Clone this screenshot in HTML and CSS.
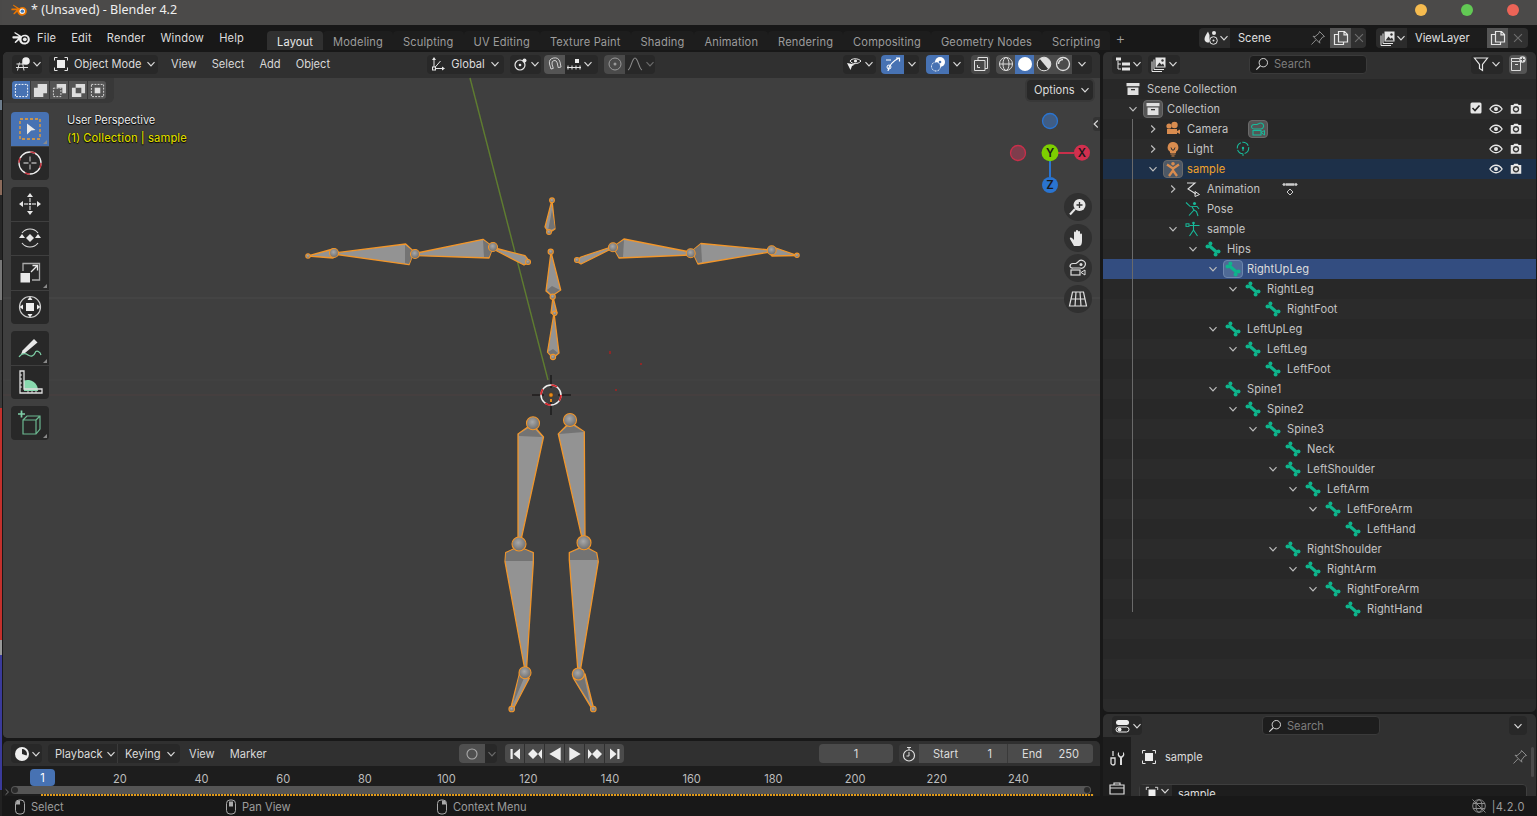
FILE: index.html
```html
<!DOCTYPE html>
<html lang="en">
<head>
<meta charset="utf-8">
<title>Blender 4.2</title>
<link rel="stylesheet" href="styles.css">
</head>
<body>
<svg class="defs" aria-hidden="true">
  <defs>
    <radialGradient id="ball" cx="45%" cy="40%" r="60%"><stop offset="0" stop-color="#a8a8a8"/><stop offset="1" stop-color="#6e6e6e"/></radialGradient>
    <symbol id="chev" viewBox="0 0 10 10"><path d="M1.5 3.2 5 6.8l3.5-3.6" fill="none" stroke="currentColor" stroke-width="1.2"/></symbol>
    <symbol id="chevr" viewBox="0 0 10 10"><path d="M3.2 1.5 6.8 5 3.2 8.5" fill="none" stroke="currentColor" stroke-width="1.2"/></symbol>
    <symbol id="blend" viewBox="0 0 18 16"><path d="M1 6.200h6L2.600 3.200c-.6-.5 0-1.300.7-.9l6 3.600c1-.7 2.200-1.200 3.500-1.200 2.900 0 5 2 5 4.700 0 2.800-2.400 5-5.300 5-3 0-5.200-1.900-5.400-4.500L4 12.700c-.8.600-1.800-.2-1.100-1L6 8.400H1c-.8 0-.8-2.200 0-2.200z" fill="currentColor"/><circle cx="12.600" cy="9.400" r="3.100" fill="var(--hole)"/><circle cx="12.800" cy="9.300" r="1.900" fill="var(--core)"/></symbol>
    <symbol id="bone" viewBox="0 0 16 16"><path d="M4 4.500 12 11.500" stroke="#0fb48c" stroke-width="3.200" fill="none"/><circle cx="2.500" cy="5.600" r="2" fill="#0fb48c"/><circle cx="5.400" cy="2.500" r="2" fill="#0fb48c"/><circle cx="10.600" cy="13.500" r="2" fill="#0fb48c"/><circle cx="13.500" cy="10.400" r="2" fill="#0fb48c"/></symbol>
    <symbol id="eye" viewBox="0 0 16 16"><path d="M1 8c2-3 4.400-4.300 7-4.300S13 5 15 8c-2 3-4.400 4.300-7 4.300S3 11 1 8z" fill="none" stroke="#e6e6e6" stroke-width="1.500"/><circle cx="8" cy="8" r="2.300" fill="#e6e6e6"/></symbol>
    <symbol id="rcam" viewBox="0 0 16 16"><path d="M2 3.500h3l1-1.500h4l1 1.500h3v10H2z" fill="#e6e6e6"/><circle cx="8" cy="8.300" r="3.600" fill="#3a3a3a"/><circle cx="8" cy="8.300" r="2" fill="#e6e6e6"/></symbol>
    <symbol id="box" viewBox="0 0 16 16"><path d="M1.500 2h13v3.300h-13zM2.500 6.400h11v7.600h-11z" fill="#e0e0e0"/><rect x="6" y="8" width="4" height="1.300" fill="#333"/></symbol>
    <symbol id="obj" viewBox="0 0 16 16"><path d="M1.500 4.500v-3h3M11.500 1.500h3v3M14.500 11.500v3h-3M4.500 14.500h-3v-3" fill="none" stroke="#e6e6e6"/><rect x="4" y="4" width="8" height="8" fill="#eee"/></symbol>
    <symbol id="pin" viewBox="0 0 16 16"><path d="M9.500 1.500 14.500 6.500 12.700 7 9.500 11l.3 2.200-6.800-7L5 6.600 8.900 3.300zM5.800 10 1.500 14.500" fill="none" stroke="#8c8c8c"/></symbol>
    <symbol id="copy" viewBox="0 0 16 16"><path d="M5.500 1.500h6l3 3v7.500h-9zM11 1.500v3.300h3.500M5.500 4.500h-4v10h9V12" fill="none" stroke="#e6e6e6" stroke-width="1.200"/></symbol>
    <symbol id="close" viewBox="0 0 16 16"><path d="M3.500 3.500l9 9M12.500 3.500l-9 9" stroke="#6d6d6d" stroke-width="1.300"/></symbol>
    <symbol id="search" viewBox="0 0 16 16"><circle cx="9.500" cy="6.500" r="4.800" fill="none" stroke="#d8d8d8" stroke-width="1.100"/><path d="M6 10 1.500 14.500" stroke="#d8d8d8" stroke-width="1.300"/></symbol>
    <symbol id="images" viewBox="0 0 16 16"><path d="M4.500 1.500h10v10h-10z" fill="#e6e6e6"/><path d="M5.500 10.500l3-4 2 2.300 1.500-1.300 1.600 3z" fill="#333"/><circle cx="11.500" cy="4.500" r="1.200" fill="#333"/><path d="M3 3.500v10h10M1 5.500v10h10" fill="none" stroke="#e6e6e6"/></symbol>
    <symbol id="mouseL" viewBox="0 0 12 16"><rect x="1.500" y="1" width="9" height="14" rx="3.500" fill="none" stroke="#aaa"/><path d="M2 5.500h4V1.500H5Q2 1.500 2 4.500z" fill="#aaa"/></symbol>
    <symbol id="mouseM" viewBox="0 0 12 16"><rect x="1.500" y="1" width="9" height="14" rx="3.500" fill="none" stroke="#aaa"/><rect x="4" y="2.500" width="4" height="5" fill="#aaa"/></symbol>
    <symbol id="mouseR" viewBox="0 0 12 16"><rect x="1.500" y="1" width="9" height="14" rx="3.500" fill="none" stroke="#aaa"/><path d="M6 1.500h1q3 0 3 3v1H6z" fill="#aaa"/></symbol>
    <symbol id="armBody" viewBox="0 0 16 16"><circle cx="8" cy="2.800" r="1.800" fill="currentColor"/><path d="M2 3.500 8 7.500 14 3.500M8 6.500V9.500M8 9.500 4 15M8 9.500 12 15" fill="none" stroke="currentColor" stroke-width="2.300"/></symbol>
    <symbol id="poseIc" viewBox="0 0 16 16"><circle cx="9.500" cy="2.500" r="1.500" fill="#18b99a"/><path d="M1 1.500l4 3.800 7 .2 2 2.500M6.800 5.500 9 9l-5 5.500M9 9l2.500 1.500L13 15" fill="none" stroke="#18b99a" stroke-width="1.100"/></symbol>
    <symbol id="armData" viewBox="0 0 16 16"><circle cx="8.500" cy="2" r="1.300" fill="#18b99a"/><rect x="1" y="2.800" width="3" height="2.600" fill="none" stroke="#18b99a"/><path d="M4.500 4.500h10M8.500 3v6L4.500 15M8.500 9l4 6" fill="none" stroke="#18b99a" stroke-width="1.100"/></symbol>
  </defs>
</svg>

<div class="window">
  <div class="sliver"></div>
  <div class="app">

    <header class="titlebar">
      <svg class="ic16 logo-orange"><use href="#blend"/></svg>
      <span class="wintitle">* (Unsaved) - Blender 4.2</span>
      <div class="winbtns"><i class="dot yellow"></i><i class="dot green"></i><i class="dot red"></i></div>
    </header>

    <nav class="topbar">
      <svg class="logo-white"><use href="#blend"/></svg>
      <div class="menu"><span>File</span><span>Edit</span><span>Render</span><span>Window</span><span>Help</span></div>
      <div class="tabs">
        <span class="tab on">Layout</span><span class="tab">Modeling</span><span class="tab">Sculpting</span><span class="tab">UV Editing</span><span class="tab">Texture Paint</span><span class="tab">Shading</span><span class="tab">Animation</span><span class="tab">Rendering</span><span class="tab">Compositing</span><span class="tab">Geometry Nodes</span><span class="tab">Scripting</span>
      </div>
      <span class="plus">+</span>
      <div class="selector scene-sel">
        <span class="sel-ic"><svg class="ic16" viewBox="0 0 16 16"><path d="M5 1.500C3 5 1.500 7 1.500 9.200a3.500 3.500 0 0 0 5 3V5z" fill="#e6e6e6"/><circle cx="11" cy="3" r="2" fill="#e6e6e6"/><circle cx="10.500" cy="10.500" r="3.800" fill="none" stroke="#e6e6e6"/><circle cx="10.500" cy="10.500" r="1" fill="#e6e6e6"/></svg><svg class="chv"><use href="#chev"/></svg></span>
        <span class="sel-name scene-name">Scene<svg class="ic16 sel-pin"><use href="#pin"/></svg></span>
        <span class="sel-copy"><svg class="ic16"><use href="#copy"/></svg></span>
        <span class="sel-x"><svg class="ic14"><use href="#close"/></svg></span>
      </div>
      <div class="selector layer-sel">
        <span class="sel-ic"><svg class="ic16"><use href="#images"/></svg><svg class="chv"><use href="#chev"/></svg></span>
        <span class="sel-name layer-name">ViewLayer</span>
        <span class="sel-copy"><svg class="ic16"><use href="#copy"/></svg></span>
        <span class="sel-x"><svg class="ic14"><use href="#close"/></svg></span>
      </div>
    </nav>

    <main class="areas">
      <div class="left-col">

        <section class="viewport">
          <div class="vp-header">
            <span class="btn ed-btn"><svg class="ic16" viewBox="0 0 16 16"><path d="M1 11.500h12M2.500 14.500l2-8M9 14.500l-1.500-8M1.500 8h8" fill="none" stroke="#e0e0e0"/><circle cx="11" cy="5" r="3.800" fill="#eee"/></svg><svg class="chv"><use href="#chev"/></svg></span>
            <span class="btn mode-btn"><svg class="ic16"><use href="#obj"/></svg><span class="lbl">Object Mode</span><svg class="chv"><use href="#chev"/></svg></span>
            <div class="vp-menus"><span>View</span><span>Select</span><span>Add</span><span>Object</span></div>
            <span class="btn global-btn"><svg class="ic16" viewBox="0 0 16 16"><path d="M4 2.500V12.500H14M4 12.500 10.500 5" fill="none" stroke="#e6e6e6"/><path d="M2 4 4 1l2 3zM12 10.500l3 2-3 2z" fill="#e6e6e6"/><rect x="2.500" y="11" width="3" height="3" fill="#303030" stroke="#e6e6e6"/></svg><span class="lbl">Global</span><svg class="chv"><use href="#chev"/></svg></span>
            <span class="btn pivot-btn"><svg class="ic16" viewBox="0 0 16 16"><circle cx="7" cy="9" r="5" fill="none" stroke="#e6e6e6" stroke-width="1.200"/><circle cx="7" cy="9" r="1.300" fill="#e6e6e6"/><circle cx="11.500" cy="4.500" r="2" fill="#e6e6e6"/></svg><svg class="chv"><use href="#chev"/></svg></span>
            <span class="btn snap-btn"><span class="cell-grey"><svg class="ic16" viewBox="0 0 16 16"><path d="M4 13 2.500 8Q1.500 3 6.500 2T13 6l1 5-2.800.6-1-4.800Q9.500 4 7 4.500T5 8l1.300 4.400z" fill="none" stroke="#d0d0d0"/></svg></span><svg class="ic16" viewBox="0 0 16 16"><path d="M1 11.500h14M2 9.500v4M6 9.500v4M10 9.500v4M14 9.500v4" fill="none" stroke="#e6e6e6"/><rect x="9" y="3" width="4" height="4" fill="#eee"/></svg><svg class="chv"><use href="#chev"/></svg></span>
            <span class="btn prop-btn"><span class="cell-grey dim"><svg class="ic16" viewBox="0 0 16 16"><circle cx="8" cy="8" r="6" fill="none" stroke="#9a9a9a"/><circle cx="8" cy="8" r="1.500" fill="#9a9a9a"/></svg></span><svg class="ic16" viewBox="0 0 16 16"><path d="M1 14c3-1 4-12 7-12s4 11 7 12" fill="none" stroke="#8a8a8a" stroke-width="1.100"/></svg><svg class="chv dim-chv"><use href="#chev"/></svg></span>
            <div class="vp-right">
              <span class="btn vis-btn"><svg class="ic16" viewBox="0 0 16 16"><path d="M4 5c2-3 8-3 11 0-3 3.500-9 3.500-11 0z" fill="none" stroke="#eee"/><circle cx="9.500" cy="5" r="1.600" fill="#eee"/><path d="M1 7l8 1.500-3 1.500-1.500 4z" fill="#eee"/></svg><svg class="chv"><use href="#chev"/></svg></span>
              <span class="btn gizmo-btn"><span class="cell-blue"><svg class="ic16" viewBox="0 0 16 16"><path d="M3 15C4 9 8 5 14 2M11 2h3.500v3.500" fill="none" stroke="#fff" stroke-width="1.200"/><circle cx="4" cy="11" r="2" fill="none" stroke="#fff"/><path d="M1 4h5" stroke="#fff"/></svg></span><svg class="chv"><use href="#chev"/></svg></span>
              <span class="btn overlay-btn"><span class="cell-blue"><svg class="ic16" viewBox="0 0 16 16"><circle cx="10" cy="6" r="5" fill="#fff"/><circle cx="6" cy="10.500" r="4.500" fill="#4772b3" stroke="#fff" stroke-dasharray="2 1.200"/><circle cx="10" cy="6" r="1.300" fill="#4772b3"/></svg></span><svg class="chv"><use href="#chev"/></svg></span>
              <span class="btn xray-btn"><svg class="ic16" viewBox="0 0 16 16"><path d="M5 4V1.500h9.500v11H12M1.500 4.500H12v10H1.500z" fill="none" stroke="#e0e0e0"/><path d="M4.500 9v2.500H7" fill="none" stroke="#e0e0e0"/></svg></span>
              <span class="btn shade-btn">
                <span class="shade"><svg class="ic16" viewBox="0 0 16 16"><circle cx="8" cy="8" r="6.500" fill="none" stroke="#ddd"/><ellipse cx="8" cy="8" rx="3" ry="6.500" fill="none" stroke="#ddd"/><path d="M1.500 8h13" stroke="#ddd"/></svg></span>
                <span class="shade active"><svg class="ic16" viewBox="0 0 16 16"><circle cx="8" cy="8" r="7" fill="#fff"/></svg></span>
                <span class="shade"><svg class="ic16" viewBox="0 0 16 16"><circle cx="8" cy="8" r="6.800" fill="#333" stroke="#ddd"/><path d="M8 1.200a6.800 6.800 0 0 1 0 13.600z" fill="#ddd" transform="rotate(-40 8 8)"/></svg></span>
                <span class="shade"><svg class="ic16" viewBox="0 0 16 16"><circle cx="8" cy="8" r="6.500" fill="none" stroke="#ddd" stroke-width="1.300"/><path d="M3.500 8A4.500 4.500 0 0 1 8 3.500" fill="none" stroke="#ddd" stroke-width="1.500"/></svg></span>
                <span class="shade-ch"><svg class="chv"><use href="#chev"/></svg></span>
              </span>
            </div>
          </div>

          <div class="canvas">
            <svg class="scene" viewBox="3 78 1097 660">
              <path class="grid" d="M3 298H1100"/>
              <path class="grid faint" d="M3 380H1100"/>
              <path class="xaxis" d="M3 395H1100"/>
              <path class="yaxis" d="M470 78 548 380"/>

              <!-- arm, screen left -->
              <polygon class="b" points="308,256 333,249 338,253 333,258"/>
              <polygon class="b" points="337,252.700 405.700,244 414,251.700 409,264.700 337,254.500"/>
              <polygon class="s" points="405,245 414,252 409,264 405,263"/>
              <polygon class="b" points="417,253 483,239.300 493,247 489,258 417,255.700"/>
              <polygon class="s" points="483,240 493,247 489,257 484,257"/>
              <polygon class="b" points="495,248 525,255.700 530,262 524,265 495,250"/>
              <circle class="j" cx="308" cy="256" r="2.200"/><circle class="j" cx="334" cy="253" r="4.500"/><circle class="j" cx="415" cy="254" r="4.500"/><circle class="j" cx="493" cy="247" r="4.500"/><circle class="j" cx="528" cy="262" r="2.500"/>

              <!-- arm, screen right -->
              <polygon class="b" points="797.500,255.500 773,247 767,250.500 772,256"/>
              <polygon class="b" points="770,250 701,243.500 692,251 698,264 770,252"/>
              <polygon class="s" points="701,244 692,251 698,263 702,262"/>
              <polygon class="b" points="690,252 624,239 613,247 619,258 690,255"/>
              <polygon class="s" points="624,240 613,247 619,257 623,257"/>
              <polygon class="b" points="611,247 581,257 576,261 581,264 611,249"/>
              <circle class="j" cx="797" cy="255.300" r="2.200"/><circle class="j" cx="771.700" cy="250.300" r="4.500"/><circle class="j" cx="690.700" cy="253.300" r="4.500"/><circle class="j" cx="613" cy="247.300" r="4.500"/><circle class="j" cx="577" cy="260" r="2.500"/>

              <!-- spine and head -->
              <polygon class="b" points="552,200 545,227 549,233 555,229"/>
              <polygon class="s" points="552,210 548,231 555,228"/>
              <polygon class="b" points="551,252 546,291 552,296 560.700,290"/>
              <polygon class="s" points="547,290 552,295 560,290 552,286"/>
              <polygon class="b" points="553,297 551,313 555,315 557,313"/>
              <polygon class="b" points="554,313 547.500,352 553,358 559,353"/>
              <polygon class="s" points="548,352 553,357 558,353 553,349"/>
              <circle class="j" cx="552" cy="200.300" r="2.400"/><circle class="j" cx="550.700" cy="251.700" r="2.600"/><circle class="j" cx="549" cy="232" r="2.400"/><circle class="j" cx="552.700" cy="296.700" r="2.600"/><circle class="j" cx="554.700" cy="313.300" r="2.200"/><circle class="j" cx="553" cy="357" r="2.600"/>

              <!-- legs -->
              <polygon class="b" points="532,424 518,434 518,540 521,540 543.500,437"/>
              <polygon class="s" points="532,426 519,434 519,436 542,437"/>
              <polygon class="b" points="570,422 558.300,434 581.700,536.700 585,536 584.300,431.700"/>
              <polygon class="s" points="570,424 559,434 584,432"/>
              <polygon class="b" points="518.300,546.700 505.700,552.700 505,561.700 524.300,666.700 526.700,666.700 533.300,563 533.300,552.700"/>
              <polygon class="s" points="519,547 506,553 505.500,561 532.500,561 532.500,553"/>
              <polygon class="b" points="584,546 569.300,552.700 569.300,560 577.700,668.300 580.700,668.300 598.300,561.700 596.700,552.700"/>
              <polygon class="s" points="584,547 570,553 570,560 597.500,560 596,553"/>
              <polygon class="b" points="520,671.700 510.700,708.300 512.700,710 529.300,678.300"/>
              <polygon class="s" points="520,672 513,704 524,678"/>
              <polygon class="b" points="573.300,678 591.700,708.300 594,710 585,674"/>
              <polygon class="s" points="574,678 584,676 590,703"/>
              <circle class="j" cx="533" cy="423.300" r="6.500"/><circle class="j" cx="570" cy="420" r="6.500"/><circle class="j" cx="519" cy="544" r="7"/><circle class="j" cx="584" cy="542.700" r="7"/><circle class="j" cx="525" cy="672.700" r="6"/><circle class="j" cx="578.300" cy="674" r="6"/><circle class="j" cx="511.700" cy="709" r="2.800"/><circle class="j" cx="593.300" cy="709" r="2.800"/>

              <!-- 3D cursor and origin -->
              <path class="curs" d="M551 375V388M551 402V415M532 395H544M558 395H571"/>
              <circle class="cur-w" cx="551" cy="395" r="10"/>
              <circle class="cur-r" cx="551" cy="395" r="10"/>
              <circle class="origin" cx="551" cy="395" r="2.200"/>
              <rect class="origin2" x="550" y="399" width="2" height="3"/>
              <path class="specks" d="M610 351v3M640 364h2M615 390h2"/>

              <!-- gizmo -->
              <path class="gz-x" d="M1050 153H1074"/>
              <path class="gz-z" d="M1050 153V177"/>
              <circle class="gz-b2" cx="1050" cy="121" r="7.500"/>
              <circle class="gz-r2" cx="1018" cy="153" r="7.500"/>
              <circle class="gz-y" cx="1050" cy="152.700" r="8.500"/>
              <circle class="gz-xc" cx="1082" cy="152.700" r="8"/>
              <circle class="gz-zc" cx="1050" cy="185" r="8"/>
              <text class="gz-t" x="1050" y="157">Y</text>
              <text class="gz-t" x="1082" y="157">X</text>
              <text class="gz-t" x="1050" y="189">Z</text>
            </svg>

            <div class="tool-header">
              <span class="sm on"><svg class="ic16" viewBox="0 0 16 16"><rect x="1.500" y="1.500" width="13" height="13" fill="none" stroke="#fff" stroke-dasharray="2 1.300"/></svg></span>
              <span class="sm"><svg class="ic16" viewBox="0 0 16 16"><path d="M5 1h10v10h-4v4H1V5h4z" fill="#ddd"/></svg></span>
              <span class="sm"><svg class="ic16" viewBox="0 0 16 16"><path d="M5 1h10v10h-4V5H5z" fill="#ddd"/><path d="M1.500 5.500h8v9h-8z" fill="none" stroke="#ddd" stroke-dasharray="2 1.300"/></svg></span>
              <span class="sm"><svg class="ic16" viewBox="0 0 16 16"><path fill-rule="evenodd" d="M5 1h10v10h-4v4H1V5h4zM5 5v6h6V5z" fill="#ddd"/></svg></span>
              <span class="sm"><svg class="ic16" viewBox="0 0 16 16"><path d="M1.500 1.500h13v13h-13z" fill="none" stroke="#ddd" stroke-dasharray="2 1.300"/><rect x="5" y="5" width="6" height="6" fill="#ddd"/></svg></span>
            </div>

            <button class="options"><span class="opt-t">Options</span><svg class="chv"><use href="#chev"/></svg></button>

            <div class="vp-info">
              <div class="info-1">User Perspective</div>
              <div class="info-2">(1) Collection | sample</div>
            </div>

            <div class="tools">
              <div class="tgroup">
                <span class="tool on corner"><svg class="ic26" viewBox="0 0 26 26"><rect x="3" y="3" width="20" height="20" fill="none" stroke="#f0a030" stroke-width="1.300" stroke-dasharray="3 2"/><path d="M10 7.500 18.500 14l-4.300.5L10 18.500z" fill="#e8e8e8"/></svg></span>
                <span class="tool"><svg class="ic26" viewBox="0 0 26 26"><circle cx="13" cy="13" r="11" fill="none" stroke="#eee" stroke-width="1.300"/><circle cx="13" cy="13" r="11" fill="none" stroke="#c0303a" stroke-width="1.500" stroke-dasharray="5 12.280"/><path d="M13 6.500v5M13 14.500v5M6.500 13h5M14.500 13h5" stroke="#aaa" stroke-width="1.300"/></svg></span>
              </div>
              <div class="tgroup">
                <span class="tool"><svg class="ic26" viewBox="0 0 26 26"><path d="M13 2l3 4h-6zM13 24l3-4h-6zM2 13l4-3v6zM24 13l-4-3v6z" fill="#e8e8e8"/><path d="M13 7v4M13 15v4M7 13h4M15 13h4" stroke="#bbb" stroke-width="1.400"/><circle cx="13" cy="13" r="1.300" fill="#ddd"/></svg></span>
                <span class="tool"><svg class="ic26" viewBox="0 0 26 26"><path d="M5 8a10 10 0 0 1 16 0M21 18a10 10 0 0 1-16 0" fill="none" stroke="#ddd" stroke-width="1.200"/><path d="M13 9l4 4-4 4-4-4z" fill="#e6e6e6"/><path d="M2 13h6L5 9zM18 13h6l-3-4z" fill="#e8e8e8"/></svg></span>
                <span class="tool corner"><svg class="ic26" viewBox="0 0 26 26"><rect x="3.500" y="13" width="9.500" height="9.500" fill="#e8e8e8"/><path d="M6 11V3.500h16.500V20H15" fill="none" stroke="#aaa" stroke-width="1.300"/><path d="M14 12 20 6M15.500 5.500h5v5" fill="none" stroke="#e8e8e8" stroke-width="1.300"/></svg></span>
                <span class="tool"><svg class="ic26" viewBox="0 0 26 26"><circle cx="13" cy="13" r="10.500" fill="none" stroke="#ccc" stroke-width="1.200"/><rect x="9" y="9" width="8" height="8" fill="#eee"/><path d="M13 2.500l2.500 3.500h-5zM13 23.500l2.500-3.500h-5zM2.500 13l3.500-2.500v5zM23.500 13 20 10.500v5z" fill="#eee"/></svg></span>
              </div>
              <div class="tgroup">
                <span class="tool corner"><svg class="ic26" viewBox="0 0 26 26"><path d="M8 18 4 19.500l1.500-4L17 4l3.500 3.500z" fill="#e8e8e8"/><path d="M2 22c3-4 6-4 9-2s6 1 7-2 5-2 6 2" fill="none" stroke="#7fd0a8" stroke-width="1.200"/></svg></span>
                <span class="tool"><svg class="ic26" viewBox="0 0 26 26"><path d="M7 22V11.500A10.500 10.500 0 0 1 21 22z" fill="#88d8ae"/><path d="M3 24V2h4v18h18v4z" fill="none" stroke="#ddd" stroke-width="1.300"/><path d="M3 6h2M3 10h2M3 14h2M3 18h2M11 24v-2M15 24v-2M19 24v-2" stroke="#ddd"/></svg></span>
              </div>
              <div class="tgroup">
                <span class="tool corner"><svg class="ic26" viewBox="0 0 26 26"><path d="M1 4h7M4.500 .5v7" stroke="#7fd0a8" stroke-width="1.700"/><path d="M6 10 10 6h13v13l-4 5H6zM6 10h13v14M19 10l4-4" fill="none" stroke="#6bb890" stroke-width="1.200"/></svg></span>
              </div>
            </div>

            <span class="npanel-arrow"><svg class="chv"><use href="#chevr"/></svg></span>

            <div class="navs">
              <span class="nav"><svg class="ic20" viewBox="0 0 20 20"><circle cx="11.500" cy="8" r="6" fill="#e6e6e6"/><path d="M11.500 5v6M8.500 8h6" stroke="#333" stroke-width="1.300"/><path d="M7 12 2 17.500" stroke="#e6e6e6" stroke-width="2"/></svg></span>
              <span class="nav"><svg class="ic20" viewBox="0 0 20 20"><path d="M6 18 2 11c-.6-1.500 1-2 2-1l2 2V4.500c0-1.500 2-1.500 2 0V9V3c0-1.500 2-1.500 2 0v6V4c0-1.500 2-1.500 2 0v6-3.500c0-1.500 2-1.500 2 0V13c0 3-1 5-3 5z" fill="#e6e6e6"/></svg></span>
              <span class="nav"><svg class="ic20" viewBox="0 0 20 20"><path d="M2 8.500a3 3 0 0 1 3-3h3l2-1.500a4 4 0 1 1 2 6H5a3 3 0 0 1-3-1.500z" fill="none" stroke="#ddd" stroke-width="1.200"/><circle cx="13" cy="6.500" r="1.500" fill="#ddd"/><rect x="3" y="12" width="9" height="5" fill="none" stroke="#ddd" stroke-width="1.200"/><path d="M13 14.500l4-2.500v5z" fill="none" stroke="#ddd"/></svg></span>
              <span class="nav"><svg class="ic20" viewBox="0 0 20 20"><path d="M4.500 3h11L18.500 17h-17zM3 10h14M8 3 7 17M12 3l1 14" fill="none" stroke="#ddd" stroke-width="1.200"/></svg></span>
            </div>
          </div>
        </section>

        <section class="timeline">
          <div class="tl-header">
            <span class="btn ed-btn"><svg class="ic16" viewBox="0 0 16 16"><path fill-rule="evenodd" d="M8 1a7 7 0 1 1 0 14A7 7 0 0 1 8 1zM8 3v5l4.500 1.500A5 5 0 0 0 13 8a5 5 0 0 0-5-5z" fill="#eee"/></svg><svg class="chv"><use href="#chev"/></svg></span>
            <span class="linked">
              <span class="btn pb-btn"><span class="lbl">Playback</span><svg class="chv"><use href="#chev"/></svg></span><span class="btn kb-btn"><span class="lbl">Keying</span><svg class="chv"><use href="#chev"/></svg></span>
            </span>
            <div class="tl-menus"><span>View</span><span>Marker</span></div>
            <span class="btn rec-btn"><span class="cell-grey wide"><svg class="ic12" viewBox="0 0 12 12"><circle cx="6" cy="6" r="5" fill="none" stroke="#aaa" stroke-width="1.100"/></svg></span><svg class="chv dim-chv"><use href="#chev"/></svg></span>
            <span class="transport">
              <span><svg class="ic12" viewBox="0 0 12 12"><path d="M1.500 1h2.200v10H1.500zM11 .5v11L4.500 6z" fill="#eee"/></svg></span>
              <span><svg class="ic16" viewBox="0 0 16 16"><path d="M6 3l5 5-5 5-5-5zM15 3v10l-4-5z" fill="#eee"/></svg></span>
              <span><svg class="ic16" viewBox="0 0 14 14"><path d="M12 1v12L2 7z" fill="#eee"/></svg></span>
              <span><svg class="ic16" viewBox="0 0 14 14"><path d="M2 1v12l10-6z" fill="#eee"/></svg></span>
              <span><svg class="ic16" viewBox="0 0 16 16"><path d="M1 3v10l4-5zM10 3l5 5-5 5-5-5z" fill="#eee"/></svg></span>
              <span><svg class="ic12" viewBox="0 0 12 12"><path d="M8.300 1h2.200v10H8.300zM1 .5v11L7.500 6z" fill="#eee"/></svg></span>
            </span>
            <span class="frame-cur">1</span>
            <span class="frame-range">
              <span class="fr-ic"><svg class="ic16" viewBox="0 0 16 16"><circle cx="8" cy="9.500" r="5.500" fill="none" stroke="#ddd" stroke-width="1.200"/><path d="M8 6v4H5.500M6 1.500h4M8 1.500v2.500" fill="none" stroke="#ddd"/></svg></span>
              <span class="fr-field f-start"><b>Start</b><b>1</b></span>
              <span class="fr-field f-end"><b>End</b><b>250</b></span>
            </span>
          </div>
          <div class="tl-body">
            <div class="ruler"><span>20</span><span>40</span><span>60</span><span>80</span><span>100</span><span>120</span><span>140</span><span>160</span><span>180</span><span>200</span><span>220</span><span>240</span></div>
            <span class="playhead">1</span>
            <svg class="chv ch-tl"><use href="#chevr"/></svg>
            <div class="scrollbar"><i></i><i></i></div>
            <div class="keys"></div>
          </div>
        </section>
      </div>

      <div class="right-col">
        <section class="outliner">
          <div class="ol-header">
            <span class="btn ol-ed"><svg class="ic16" viewBox="0 0 16 16"><path d="M1 1.500h5v3H1zM7 6.500h8v3H7zM7 11.500h8v3H7z" fill="#e6e6e6"/><path d="M3 5v8h3M3 8h3" fill="none" stroke="#e6e6e6"/></svg><svg class="chv"><use href="#chev"/></svg></span>
            <span class="btn ol-disp"><svg class="ic16"><use href="#images"/></svg><svg class="chv"><use href="#chev"/></svg></span>
            <span class="searchbox ol-search"><svg class="ic14"><use href="#search"/></svg><span class="st-t">Search</span></span>
            <span class="btn ol-filter"><svg class="ic16" viewBox="0 0 16 16"><path d="M1.500 2h13L9.500 8.500v6L6.500 12.500v-4z" fill="none" stroke="#e6e6e6" stroke-width="1.200"/></svg><svg class="chv"><use href="#chev"/></svg></span>
            <span class="btn ol-new"><svg class="ic16" viewBox="0 0 16 16"><path d="M1.500 2.500h8M1.500 5.500h9v9h-9zM1.500 2v3M5 8.500h3" fill="none" stroke="#ddd"/><circle cx="12.500" cy="3.500" r="3.200" fill="#ddd"/><path d="M12.500 1.500v4M10.500 3.500h4" stroke="#555"/></svg></span>
          </div>
          <div class="tree">
            <div class="treeline"></div>
            <div class="row d0"><span class="oi"><svg class="ic16"><use href="#box"/></svg></span><span class="nm">Scene Collection</span></div>
            <div class="row d0"><svg class="ar"><use href="#chev"/></svg><span class="oi hl"><svg class="ic16"><use href="#box"/></svg></span><span class="nm">Collection</span><span class="vis"><span><svg class="ic12" viewBox="0 0 12 12"><rect x=".5" y=".5" width="11" height="11" rx="1.500" fill="#e6e6e6"/><path d="M2.500 6l2.500 2.500 4.500-5" fill="none" stroke="#222" stroke-width="1.600"/></svg></span><span><svg class="ic14"><use href="#eye"/></svg></span><span><svg class="ic14"><use href="#rcam"/></svg></span></span></div>
            <div class="row d1"><svg class="ar"><use href="#chevr"/></svg><span class="oi"><svg class="ic16" viewBox="0 0 16 16"><circle cx="4" cy="5" r="2.600" fill="#d98c4f"/><circle cx="9.500" cy="4" r="3.200" fill="#d98c4f"/><path d="M2 8h10v5H2zM12 10l3-1.500V13l-3-1.500z" fill="#d98c4f"/></svg></span><span class="nm">Camera</span><span class="oi sub hl"><svg class="ic16" viewBox="0 0 16 16"><path d="M1.500 6a2.500 2.500 0 0 1 2.500-2.500h3L9 2.500a3 3 0 1 1 2 5.500H4A2.500 2.500 0 0 1 1.500 6z" fill="none" stroke="#18b99a" stroke-width="1.100"/><rect x="3" y="9.500" width="8" height="4.500" fill="none" stroke="#18b99a" stroke-width="1.100"/><path d="M11 11.500l3.500-2v4.500z" fill="none" stroke="#18b99a"/></svg></span><span class="vis"><span></span><span><svg class="ic14"><use href="#eye"/></svg></span><span><svg class="ic14"><use href="#rcam"/></svg></span></span></div>
            <div class="row d1"><svg class="ar"><use href="#chevr"/></svg><span class="oi"><svg class="ic16" viewBox="0 0 16 16"><path d="M8 1a5.300 5.300 0 0 1 3 9.700V12H5v-1.300A5.300 5.300 0 0 1 8 1z" fill="#d98c4f"/><path d="M5.500 13h5M6.500 15h3" fill="none" stroke="#d98c4f" stroke-width="1.100"/><path d="M6 6.500l1 2.500h2l1-2.500" fill="none" stroke="#333"/></svg></span><span class="nm">Light</span><span class="oi sub"><svg class="ic16" viewBox="0 0 16 16"><circle cx="8" cy="7" r="5.700" fill="none" stroke="#18b99a" stroke-width="1.100" stroke-dasharray="7 1.500"/><circle cx="8" cy="7" r="1.200" fill="#18b99a"/><path d="M8 8v2M8 13v2" stroke="#18b99a"/></svg></span><span class="vis"><span></span><span><svg class="ic14"><use href="#eye"/></svg></span><span><svg class="ic14"><use href="#rcam"/></svg></span></span></div>
            <div class="row d1 sel-obj"><svg class="ar"><use href="#chev"/></svg><span class="oi hl arm"><svg class="ic16"><use href="#armBody"/></svg></span><span class="nm orange">sample</span><span class="vis"><span></span><span><svg class="ic14"><use href="#eye"/></svg></span><span><svg class="ic14"><use href="#rcam"/></svg></span></span></div>
            <div class="row d2"><svg class="ar"><use href="#chevr"/></svg><span class="oi"><svg class="ic16" viewBox="0 0 16 16"><path d="M2 2h8L3 8l8 5" fill="none" stroke="#ddd" stroke-width="1.100"/><path d="M10 10.500l4.500 3-4.500 2z" fill="none" stroke="#ddd"/></svg></span><span class="nm">Animation</span><span class="oi sub"><svg class="ic16" viewBox="0 0 16 16"><path d="M3.500 3.500h9" stroke="#ccc" stroke-width="2.600"/><path d="M2 1.800 3.800 3.500 2 5.200.2 3.500zM14 1.800 15.800 3.500 14 5.200 12.200 3.500z" fill="#ccc"/><path d="M8 8l3 3-3 3-3-3z" fill="none" stroke="#ccc"/></svg></span></div>
            <div class="row d2"><span class="ar"></span><span class="oi"><svg class="ic16"><use href="#poseIc"/></svg></span><span class="nm">Pose</span></div>
            <div class="row d2"><svg class="ar"><use href="#chev"/></svg><span class="oi"><svg class="ic16"><use href="#armData"/></svg></span><span class="nm">sample</span></div>
            <div class="row d3"><svg class="ar"><use href="#chev"/></svg><span class="oi"><svg class="ic16"><use href="#bone"/></svg></span><span class="nm">Hips</span></div>
            <div class="row d4 sel-bone"><svg class="ar"><use href="#chev"/></svg><span class="oi hl hlb"><svg class="ic16"><use href="#bone"/></svg></span><span class="nm">RightUpLeg</span></div>
            <div class="row d5"><svg class="ar"><use href="#chev"/></svg><span class="oi"><svg class="ic16"><use href="#bone"/></svg></span><span class="nm">RightLeg</span></div>
            <div class="row d6"><span class="ar"></span><span class="oi"><svg class="ic16"><use href="#bone"/></svg></span><span class="nm">RightFoot</span></div>
            <div class="row d4"><svg class="ar"><use href="#chev"/></svg><span class="oi"><svg class="ic16"><use href="#bone"/></svg></span><span class="nm">LeftUpLeg</span></div>
            <div class="row d5"><svg class="ar"><use href="#chev"/></svg><span class="oi"><svg class="ic16"><use href="#bone"/></svg></span><span class="nm">LeftLeg</span></div>
            <div class="row d6"><span class="ar"></span><span class="oi"><svg class="ic16"><use href="#bone"/></svg></span><span class="nm">LeftFoot</span></div>
            <div class="row d4"><svg class="ar"><use href="#chev"/></svg><span class="oi"><svg class="ic16"><use href="#bone"/></svg></span><span class="nm">Spine1</span></div>
            <div class="row d5"><svg class="ar"><use href="#chev"/></svg><span class="oi"><svg class="ic16"><use href="#bone"/></svg></span><span class="nm">Spine2</span></div>
            <div class="row d6"><svg class="ar"><use href="#chev"/></svg><span class="oi"><svg class="ic16"><use href="#bone"/></svg></span><span class="nm">Spine3</span></div>
            <div class="row d7"><span class="ar"></span><span class="oi"><svg class="ic16"><use href="#bone"/></svg></span><span class="nm">Neck</span></div>
            <div class="row d7"><svg class="ar"><use href="#chev"/></svg><span class="oi"><svg class="ic16"><use href="#bone"/></svg></span><span class="nm">LeftShoulder</span></div>
            <div class="row d8"><svg class="ar"><use href="#chev"/></svg><span class="oi"><svg class="ic16"><use href="#bone"/></svg></span><span class="nm">LeftArm</span></div>
            <div class="row d9"><svg class="ar"><use href="#chev"/></svg><span class="oi"><svg class="ic16"><use href="#bone"/></svg></span><span class="nm">LeftForeArm</span></div>
            <div class="row d10"><span class="ar"></span><span class="oi"><svg class="ic16"><use href="#bone"/></svg></span><span class="nm">LeftHand</span></div>
            <div class="row d7"><svg class="ar"><use href="#chev"/></svg><span class="oi"><svg class="ic16"><use href="#bone"/></svg></span><span class="nm">RightShoulder</span></div>
            <div class="row d8"><svg class="ar"><use href="#chev"/></svg><span class="oi"><svg class="ic16"><use href="#bone"/></svg></span><span class="nm">RightArm</span></div>
            <div class="row d9"><svg class="ar"><use href="#chev"/></svg><span class="oi"><svg class="ic16"><use href="#bone"/></svg></span><span class="nm">RightForeArm</span></div>
            <div class="row d10"><span class="ar"></span><span class="oi"><svg class="ic16"><use href="#bone"/></svg></span><span class="nm">RightHand</span></div>
          </div>
        </section>

        <section class="props">
          <div class="pr-header">
            <span class="btn ol-ed"><svg class="ic16" viewBox="0 0 16 16"><rect x="1" y="2" width="13" height="5" rx="2.500" fill="#eee"/><rect x="1" y="9" width="13" height="5" rx="2.500" fill="none" stroke="#eee"/><circle cx="4.500" cy="11.500" r="2" fill="#eee"/></svg><svg class="chv"><use href="#chev"/></svg></span>
            <span class="searchbox pr-search"><svg class="ic14"><use href="#search"/></svg><span class="st-t">Search</span></span>
            <span class="btn pr-drop"><svg class="chv"><use href="#chev"/></svg></span>
          </div>
          <div class="pr-body">
            <div class="pr-tabs">
              <span class="pr-tab"><svg class="ic16" viewBox="0 0 16 16"><path d="M4 1v5M2 8h4v5a2 2 0 0 1-4 0z" fill="none" stroke="#ddd" stroke-width="1.300"/><path d="M10 2v3l2 1.500L14 5V2a3 3 0 0 1 0 5l-1 1v7h-2V8l-1-1a3 3 0 0 1 0-5z" fill="#ddd"/></svg></span>
              <span class="pr-tab"><svg class="ic16" viewBox="0 0 16 16"><path d="M1 5h14v9H1zM5 5V3h6v2M1 8h14" fill="none" stroke="#ddd" stroke-width="1.200"/></svg></span>
            </div>
            <div class="pr-main">
              <div class="pr-title"><svg class="ic16"><use href="#obj"/></svg><span class="st-t">sample</span><svg class="ic16 pr-pin"><use href="#pin"/></svg></div>
              <div class="pr-field"><span class="pf-ic"><svg class="ic14"><use href="#obj"/></svg><svg class="chv"><use href="#chev"/></svg></span><span class="pf-name">sample</span></div>
              <span class="pr-scroll"></span>
            </div>
          </div>
        </section>
      </div>
    </main>

    <footer class="status">
      <span class="st st-1"><svg class="mouse"><use href="#mouseL"/></svg><span class="st-t">Select</span></span>
      <span class="st st-2"><svg class="mouse"><use href="#mouseM"/></svg><span class="st-t">Pan View</span></span>
      <span class="st st-3"><svg class="mouse"><use href="#mouseR"/></svg><span class="st-t">Context Menu</span></span>
      <span class="st-right"><svg class="ic16" viewBox="0 0 16 16"><circle cx="8" cy="8" r="6.300" fill="none" stroke="#8a8a8a"/><ellipse cx="8" cy="8" rx="3" ry="6.300" fill="none" stroke="#8a8a8a"/><path d="M2 5.500h12M2 10.500h12M1.500 1.500l13 13" fill="none" stroke="#8a8a8a"/></svg><span class="st-sep st-t">|</span><span class="st-t">4.2.0</span></span>
    </footer>
  </div>
</div>
</body>
</html>
```

FILE: styles.css
```css
* { box-sizing: border-box; }
html, body { margin: 0; height: 100%; overflow: hidden; background: #181818; }
body { font: 11.1px/1 Inter, "Liberation Sans", sans-serif; color: #d4d4d4; }
.defs { position: absolute; width: 0; height: 0; }
svg { display: block; flex: none; overflow: visible; }
.ic12 { width: 12px; height: 12px; }
.ic14 { width: 14px; height: 14px; }
.ic16 { width: 16px; height: 16px; }
.ic20 { width: 20px; height: 20px; }
.ic26 { width: 26px; height: 26px; }
.chv { width: 10px; height: 10px; color: #d8d8d8; }
.dim-chv { color: #6a6a6a; }

/* text sits a pixel lower than the line box centre, as in Blender's UI */
.lbl, .nm, .st-t, .opt-t, .sel-name, .vp-menus span, .tl-menus span, .frame-cur, .fr-field b, .ruler span, .playhead { padding-top: 2px; }

.window { display: flex; width: 1537px; height: 816px; }
.sliver {
  width: 2px; flex: none;
  background: linear-gradient(#4a4948 0 25px, #181818 25px 100px, #6c7c8c 100px 110px, #262626 110px 180px, #8b6a5a 180px 195px, #262626 195px 260px, #777 260px 300px, #3a3a3a 300px 408px, #c2302c 408px 640px, #999 640px 655px, #3a3a9a 655px 790px, #222 790px);
}
.app { flex: 1; min-width: 0; display: flex; flex-direction: column; }

/* title bar */
.titlebar { height: 25px; flex: none; display: flex; align-items: center; padding: 0 0 5px 9px; background: #4b4a49; --hole: #f5f5f5; --core: #3f78b8; }
.logo-orange { color: #ea7600; }
.wintitle { margin-left: 4px; font: 12.5px/1 "Noto Sans", sans-serif; color: #efefef; }
.winbtns { margin-left: auto; display: flex; gap: 34px; padding-right: 18px; margin-bottom: 1px; }
.dot { width: 12px; height: 12px; border-radius: 50%; }
.yellow { background: #f5bb4f; }
.green { background: #62c954; }
.red { background: #ec6457; }

/* top bar */
.topbar { height: 26px; flex: none; display: flex; padding-right: 9px; background: #181818; --hole: #181818; --core: #e8e8e8; }
.logo-white { width: 18px; height: 16px; margin: 5px 0 0 10px; color: #eee; }
.menu { display: flex; gap: 15px; margin: 0 0 0 7px; padding-top: 8px; width: 230px; color: #dcdcdc; letter-spacing: .2px; }
.tabs { display: flex; align-items: flex-end; height: 25px; }
.tab { height: 19px; padding: 6px 10px 0; color: #9c9c9c; background: #1d1d1d; border-radius: 4px 4px 0 0; white-space: nowrap; letter-spacing: .15px; }
.tab.on { background: #303030; color: #e8e8e8; }
.plus { width: 20px; padding-top: 6px; text-align: center; font-size: 15px; font-weight: 300; color: #a0a0a0; }
.selector { display: flex; height: 20px; margin-top: 3px; border-radius: 4px; overflow: hidden; background: #1d1d1d; }
.scene-sel { margin-left: auto; width: 167px; }
.layer-sel { margin-left: 10px; width: 152px; }
.sel-ic { width: 31px; display: flex; align-items: center; padding-left: 4px; background: #2b2b2b; }
.sel-name { display: flex; align-items: center; padding-left: 8px; color: #e0e0e0; position: relative; }
.scene-name { width: 100px; }
.layer-name { width: 80px; }
.sel-pin { position: absolute; right: 4px; top: 2px; }
.sel-copy { width: 21px; display: flex; align-items: center; justify-content: center; background: #555; }
.sel-x { flex: 1; display: flex; align-items: center; justify-content: center; background: #303030; }

/* main areas */
.areas { flex: 1; min-height: 0; display: flex; gap: 3px; padding: 1px 1px 0; }
.left-col { width: 1097px; flex: none; display: flex; flex-direction: column; gap: 3px; }
.right-col { flex: 1; display: flex; flex-direction: column; gap: 2px; min-width: 0; }

/* generic button */
.btn { display: inline-flex; align-items: center; gap: 3px; height: 19px; border-radius: 4px; background: #282828; color: #dcdcdc; flex: none; overflow: hidden; }
.lbl { white-space: nowrap; }
.cell-grey { width: 22px; align-self: stretch; display: flex; align-items: center; justify-content: center; background: #545454; }
.cell-grey.dim { background: #4a4a4a; }
.cell-grey.wide { width: 26px; background: #4f4f4f; }
.cell-blue { width: 23px; align-self: stretch; display: flex; align-items: center; justify-content: center; background: #4772b3; }

/* viewport */
.viewport { flex: 1; min-height: 0; display: flex; flex-direction: column; border-radius: 5px; overflow: hidden; background: #3f3f3f; }
.vp-header { height: 26px; flex: none; display: flex; align-items: center; padding: 0 8px 2px 9px; background: #303030; }
.ed-btn { width: 30px; padding-left: 3px; gap: 1px; margin-right: 7px; }
.mode-btn { width: 109px; padding: 0 5px 0 4px; gap: 5px; justify-content: space-between; }
.vp-menus { width: 256px; margin-left: 13px; display: flex; gap: 15px; color: #d8d8d8; }
.global-btn { width: 77px; padding: 0 4px 0 3px; justify-content: space-between; }
.pivot-btn { width: 31px; margin-left: 6px; padding-left: 3px; gap: 1px; }
.snap-btn { width: 54px; margin-left: 3px; gap: 1px; }
.prop-btn { width: 51px; margin-left: 6px; gap: 2px; }
.snap-btn .cell-grey { width: 21px; }
.prop-btn .cell-grey { width: 21px; }
.vp-right { margin-left: auto; display: flex; align-items: center; }
.vis-btn { width: 33px; padding-left: 3px; gap: 2px; }
.gizmo-btn { width: 38px; margin-left: 5px; gap: 3px; }
.overlay-btn { width: 38px; margin-left: 7px; gap: 3px; }
.xray-btn { width: 19px; margin-left: 7px; background: #484848; justify-content: center; }
.shade-btn { width: 96px; margin-left: 6px; gap: 0; background: #282828; }
.shade { width: 19px; align-self: stretch; display: flex; align-items: center; justify-content: center; background: #4b4b4b; }
.shade.active { background: #4772b3; }
.shade-ch { flex: 1; display: flex; justify-content: center; }

.canvas { flex: 1; position: relative; background: #3f3f3f; }
.scene { position: absolute; inset: 0; width: 1097px; height: 660px; }
.grid { stroke: #4b4b4b; fill: none; }
.grid.faint { stroke: #444; }
.xaxis { stroke: #4c4141; fill: none; }
.yaxis { stroke: #5f7d30; fill: none; stroke-width: 1.400; }
.b { fill: #939393; stroke: #f2962a; stroke-width: 1.300; stroke-linejoin: round; }
.s { fill: #737373; }
.j { fill: url(#ball); stroke: #f2962a; stroke-width: 1.100; }
.curs { stroke: #0a0a0a; fill: none; }
.cur-w { fill: none; stroke: #f0f0f0; stroke-width: 1.500; }
.cur-r { fill: none; stroke: #d8262c; stroke-width: 1.700; stroke-dasharray: 6 9.700; }
.origin { fill: #e88a18; stroke: #4a3316; stroke-width: .6; }
.origin2 { fill: #e88a18; }
.specks { stroke: #a82222; stroke-width: 1.500; fill: none; }
.gz-x { stroke: #c92f4a; stroke-width: 2; }
.gz-z { stroke: #2a74d0; stroke-width: 2; }
.gz-b2 { fill: #3f5d85; stroke: #2a74d0; stroke-width: 1.300; }
.gz-r2 { fill: #7e3d4c; stroke: #c92f4a; stroke-width: 1.300; }
.gz-y { fill: #7dcf00; }
.gz-xc { fill: #d22f4e; }
.gz-zc { fill: #2a74d0; }
.gz-t { font: 600 11.500px Inter, sans-serif; text-anchor: middle; fill: #1a1a1a; }

.tool-header { position: absolute; left: 0; top: 0; width: 111px; height: 25px; padding: 3px 0 0 9px; display: flex; gap: 1px; background: #383838; border-radius: 0 0 6px 0; }
.sm { width: 18px; height: 18px; display: flex; align-items: center; justify-content: center; background: #545454; }
.sm svg { width: 15px; height: 15px; }
.sm.on { background: #4772b3; border-radius: 3px 0 0 3px; }
.sm:last-child { border-radius: 0 3px 3px 0; }

.options { position: absolute; right: 7px; top: 2px; width: 66px; height: 20px; padding: 0 3px 0 7px; display: flex; align-items: center; justify-content: space-between; border: 0; border-radius: 4px; background: #282828; color: #dcdcdc; font: inherit; box-shadow: 0 0 0 2px #383838; }

.vp-info { position: absolute; left: 64px; top: 36px; display: flex; flex-direction: column; gap: 6px; text-shadow: 0 0 1px #000, 0 1px 1px #000; }
.info-1 { color: #ececec; line-height: 12px; letter-spacing: -.1px; }
.info-2 { color: #dcd800; line-height: 12px; font-weight: 500; letter-spacing: .12px; }

.tools { position: absolute; left: 8px; top: 34px; display: flex; flex-direction: column; gap: 7px; }
.tgroup { display: flex; flex-direction: column; gap: 1px; width: 38px; border-radius: 4px; overflow: hidden; }
.tool { position: relative; height: 33.500px; display: flex; align-items: center; justify-content: center; background: #282828; }
.tool.on { background: #4772b3; }
.corner::after { content: ""; position: absolute; right: 2px; bottom: 2px; border-left: 4px solid transparent; border-bottom: 4px solid #8a8a8a; }

.npanel-arrow { position: absolute; right: 0; top: 39px; width: 7px; height: 14px; display: flex; align-items: center; background: #333; border-radius: 3px 0 0 3px; overflow: hidden; }
.npanel-arrow .chv { transform: scaleX(-1); margin-left: -2px; }

.navs { position: absolute; left: 1061px; top: 115px; display: flex; flex-direction: column; gap: 2.500px; }
.nav { width: 28px; height: 28px; border-radius: 50%; background: #303030; display: flex; align-items: center; justify-content: center; }

/* timeline */
.timeline { height: 55px; flex: none; display: flex; flex-direction: column; border-radius: 5px 5px 0 0; overflow: hidden; background: #1d1d1d; }
.tl-header { height: 25px; flex: none; display: flex; align-items: center; padding-left: 8px; background: #303030; }
.tl-header .ed-btn { width: 31px; margin-right: 6px; }
.linked { display: flex; }
.pb-btn { width: 70px; padding: 0 3px 0 7px; justify-content: space-between; border-radius: 4px 0 0 4px; border-right: 1px solid #3a3a3a; }
.kb-btn { width: 62px; padding: 0 4px 0 7px; justify-content: space-between; border-radius: 0 4px 4px 0; }
.tl-menus { width: 270px; margin-left: 9px; display: flex; gap: 15px; color: #d8d8d8; }
.rec-btn { width: 38px; gap: 2px; }
.transport { display: flex; margin-left: 8px; height: 19px; gap: 1px; border-radius: 4px; overflow: hidden; }
.transport span { width: 19px; display: flex; align-items: center; justify-content: center; background: #4b4b4b; }
.frame-cur { width: 74px; height: 19px; margin-left: 195px; border-radius: 4px; background: #4b4b4b; display: flex; align-items: center; justify-content: center; color: #ddd; }
.frame-range { display: flex; width: 194px; height: 19px; margin-left: 6px; border-radius: 4px; overflow: hidden; gap: 1px; background: #3a3a3a; }
.fr-ic { width: 19px; display: flex; align-items: center; justify-content: center; background: #3a3a3a; }
.fr-field { display: flex; align-items: center; justify-content: space-between; background: #4b4b4b; color: #ddd; }
.fr-field b { font-weight: 400; }
.f-start { width: 88px; padding: 0 15px 0 14px; }
.f-end { flex: 1; padding: 0 14px; }

.tl-body { flex: 1; position: relative; }
.ruler { position: absolute; left: 76px; top: 6px; display: flex; color: #bdbdbd; }
.ruler span { width: 81.700px; text-align: center; }
.playhead { position: absolute; left: 27px; top: 3px; width: 25px; height: 17px; display: flex; align-items: center; justify-content: center; border-radius: 4px; background: #4772b3; color: #fff; }
.ch-tl { position: absolute; left: 0; top: 22px; color: #777; width: 8px; height: 8px; }
.scrollbar { position: absolute; left: 8px; right: 9px; top: 20px; height: 8px; border-radius: 4px; background: #555; display: flex; justify-content: space-between; align-items: center; padding: 0 1px; }
.scrollbar i { width: 6px; height: 6px; border-radius: 50%; background: #2a2a2a; }
.keys { position: absolute; left: 38px; right: 6px; bottom: 0; height: 2px; background: repeating-linear-gradient(90deg, #e09a1a 0 2px, #262626 2px 3px); }

/* outliner */
.outliner { height: 660px; flex: none; display: flex; flex-direction: column; border-radius: 5px; overflow: hidden; }
.ol-header { height: 27px; flex: none; display: flex; align-items: center; padding: 0 9px 3px; background: #303030; }
.ol-ed { width: 30px; padding-left: 3px; gap: 1px; }
.ol-disp { width: 32px; margin-left: 6px; padding-left: 3px; gap: 1px; }
.searchbox { display: flex; align-items: center; gap: 5px; height: 19px; padding-left: 5px; border-radius: 4px; background: #1d1d1d; border: 1px solid #3a3a3a; color: #7d7d7d; }
.ol-search { width: 118px; margin-left: 69px; }
.ol-filter { width: 32px; margin-left: auto; padding-left: 2px; gap: 2px; }
.ol-new { width: 18px; margin-left: 6px; justify-content: center; background: #545454; }
.tree { flex: 1; position: relative; background: repeating-linear-gradient(#282828 0 20px, #2b2b2b 20px 40px); }
.treeline { position: absolute; left: 29px; top: 40px; width: 1px; height: 493px; background: #6a6a6a; }
.row { height: 20px; display: flex; align-items: center; color: #c4c4c4; }
.ar { width: 20px; height: 10px; flex: none; color: #bdbdbd; }
.oi { width: 20px; height: 20px; flex: none; display: flex; align-items: center; justify-content: center; }
.hl { background: #555; height: 18px; border-radius: 4px; border: 1px solid #6a6a6a; }
.hlb { background: #4f6a96; border-color: #6d86ad; }
.arm { color: #d98c4f; background: #4d5866; }
.nm { margin-left: 4px; white-space: nowrap; letter-spacing: .08px; }
.sub { margin-left: 20px; }
.orange { color: #f0a22c; }
.sel-obj { background: #1d3049; }
.sel-bone { background: #334d80; }
.sel-bone .nm { color: #dcdcdc; }
.d0 { padding-left: 20px; }
.d1 { padding-left: 40px; }
.d2 { padding-left: 60px; }
.d3 { padding-left: 80px; }
.d4 { padding-left: 100px; }
.d5 { padding-left: 120px; }
.d6 { padding-left: 140px; }
.d7 { padding-left: 160px; }
.d8 { padding-left: 180px; }
.d9 { padding-left: 200px; }
.d10 { padding-left: 220px; }
.vis { margin-left: auto; display: flex; padding-right: 10px; }
.vis span { width: 20px; display: flex; justify-content: center; }

/* properties */
.props { flex: 1; min-height: 0; display: flex; flex-direction: column; border-radius: 5px 5px 0 0; overflow: hidden; background: #303030; }
.pr-header { height: 23px; flex: none; display: flex; align-items: center; padding: 0 9px; }
.pr-search { width: 118px; margin-left: 120px; }
.pr-drop { width: 18px; margin-left: auto; justify-content: center; }
.pr-body { flex: 1; display: flex; min-height: 0; }
.pr-tabs { width: 28px; flex: none; background: #1e1e1e; display: flex; flex-direction: column; gap: 14px; padding-top: 13px; align-items: center; }
.pr-main { flex: 1; position: relative; }
.pr-title { display: flex; align-items: center; gap: 8px; height: 20px; margin: 10px 8px 0 10px; color: #dcdcdc; }
.pr-pin { margin-left: auto; }
.pr-field { position: absolute; left: 8px; right: 9px; top: 47px; height: 24px; display: flex; border: 1px solid #3e3e3e; border-radius: 4px; background: #1d1d1d; }
.pf-ic { width: 32px; padding: 1px 0 0 5px; display: flex; gap: 1px; background: #2b2b2b; }
.pf-name { padding: 4px 0 0 6px; color: #dcdcdc; }
.pr-scroll { position: absolute; right: 2px; top: 10px; width: 3px; height: 30px; border-radius: 2px; background: #4a4a4a; }

/* status bar */
.status { height: 20px; flex: none; display: flex; align-items: center; background: #181818; color: #9c9c9c; }
.st { display: flex; align-items: center; gap: 5px; }
.st-1 { margin-left: 12px; width: 211px; }
.st-2 { width: 211px; }
.st .st-t, .st-right .st-t { padding-top: 4px; }
.mouse { width: 12px; height: 16px; margin-top: 2px; }
.st-right { margin-left: auto; padding-right: 12px; display: flex; align-items: center; gap: 4px; color: #9c9c9c; letter-spacing: .5px; }
.st-sep { margin: 0 -4px 0 1px; }
```
